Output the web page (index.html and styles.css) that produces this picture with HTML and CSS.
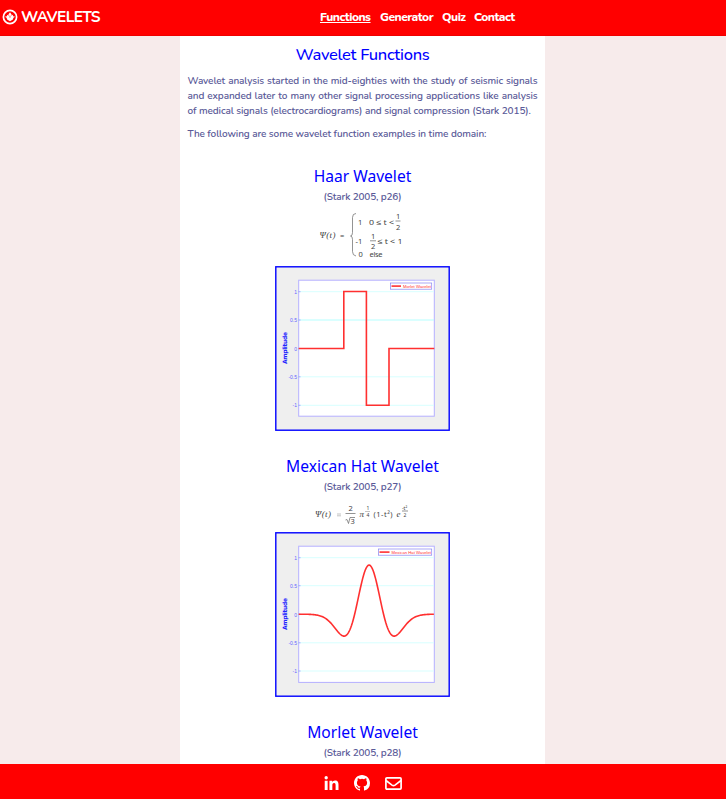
FILE: index.html
```html
<!DOCTYPE html>
<html lang="en">
<head>
<meta charset="utf-8">
<title>Wavelets</title>
<link rel="stylesheet" href="styles.css">
</head>
<body>
<header class="topbar">
  <a class="brand">
    <svg class="brand-icon" viewBox="0 0 16 16"><circle cx="8" cy="8" r="6.6" fill="none" stroke="#fff" stroke-width="1.7"/><path d="M8 3.2l1.600 2.300-.3 1.200 1.400-.9.5 1.400 1.900.5-1.700 1.100-.5 1.600L8 12.300l-2.900-1.900-.5-1.600-1.700-1.100 1.900-.5.5-1.400 1.400.9-.3-1.200z" fill="#fff"/><path d="M8 6.500v2.200" stroke="red" stroke-width=".7"/></svg>
    <span class="brand-name">WAVELETS</span>
  </a>
  <nav class="nav">
    <a class="n1 active">Functions</a><a class="n2">Generator</a><a class="n3">Quiz</a><a class="n4">Contact</a>
  </nav>
</header>
<main class="page">
  <h1>Wavelet Functions</h1>
  <p class="intro">Wavelet analysis started in the mid-eighties with the study of seismic signals and expanded later to many other signal processing applications like analysis of medical signals (electrocardiograms) and signal compression (Stark 2015).</p>
  <p class="lead">The following are some wavelet function examples in time domain:</p>

  <section class="wavelet">
    <h2>Haar Wavelet</h2>
    <p class="cite">(Stark 2005, p26)</p>
    <svg class="formula haar-formula" viewBox="0 2.5 175 61">
      <g class="math">
        <text x="44.500" y="35" class="it" textLength="16">Ψ(t)</text><text x="65" y="35">=</text>
        <path d="M81 11q-3.500 0-3.500 4v15q0 3.500-2 3.500q2 0 2 3.500v12q0 4 3.500 4.500" class="stroke"/>
        <text x="83" y="22.500">1</text><text x="94" y="22.500" textLength="25" lengthAdjust="spacingAndGlyphs">0 ≤ t &lt;</text>
        <text x="121" y="16">1</text><path d="M120.500 18.500h5" class="stroke"/><text x="121" y="27.500">2</text>
        <text x="80.500" y="41">-1</text><text x="96" y="36">1</text><path d="M95 38.300h6" class="stroke"/><text x="96" y="46.500">2</text>
        <text x="102.500" y="41" textLength="25" lengthAdjust="spacingAndGlyphs">≤ t &lt; 1</text>
        <text x="83.500" y="54.500">0</text><text x="94.500" y="54.500" textLength="13">else</text>
      </g>
    </svg>
    <svg class="chart" viewBox="0 0 175 165">
      <rect x=".8" y=".8" width="173.400" height="163.400" class="frame"/>
      <rect x="23.700" y="14.200" width="135.600" height="136" class="plot"/>
      <path d="M24 25.700h135M24 110.800h135M24 139.300h135" class="grid"/><path d="M24 54h135" class="grid strong"/>
      <path d="M23.500 25.700h2M23.500 54h2M23.500 82.500h2M23.500 110.800h2M23.500 139.300h2" class="tick"/>
      <g class="labels"><text x="22" y="27.500">1</text><text x="22" y="56">0.5</text><text x="22" y="84.500">0</text><text x="22" y="112.500">-0.5</text><text x="22" y="141">-1</text></g>
      <text class="axis" transform="translate(11.500 98) rotate(-90)" textLength="32">Amplitude</text>
      <path d="M23.700 82.500h45.100v-57h22.600v113.800h22.600V82.500h45.300" class="curve"/>
      <rect x="115.500" y="17" width="41.200" height="6.200" class="legend"/><path d="M116.500 20.100h9.500" class="curve"/>
      <text x="128" y="21.800" class="legend-text" textLength="28">Morlet Wavelet</text>
    </svg>
  </section>

  <section class="wavelet">
    <h2>Mexican Hat Wavelet</h2>
    <p class="cite">(Stark 2005, p27)</p>
    <svg class="formula hat-formula" viewBox="0 2 175 37">
      <g class="math">
        <text x="40" y="24" class="it" textLength="16">Ψ(t)</text><path d="M62 21h4M62 22.800h4" class="stroke faint"/>
        <text x="73.500" y="18">2</text><path d="M70.500 20.500h10M70.500 27l1.500-.5 1.500 4 1.500-6h5" class="stroke"/><text x="75.500" y="30.500">3</text>
        <text x="84.500" y="24" class="it">π</text><text x="91.500" y="17" class="small">1</text><path d="M90 18.500h5" class="stroke faint"/><text x="91.500" y="23.500" class="small">4</text>
        <text x="98.500" y="24" textLength="19">(1-t²)</text><text x="121.500" y="24" class="it">e</text>
        <text x="127" y="17" class="small">-t²</text><path d="M127 18h6" class="stroke"/><text x="128.500" y="23.500" class="small">2</text>
      </g>
    </svg>
    <svg class="chart" viewBox="0 0 175 165">
      <rect x=".8" y=".8" width="173.400" height="163.400" class="frame"/>
      <rect x="23.700" y="14.200" width="135.600" height="136.200" class="plot"/>
      <path d="M24 25.700h135M24 53.700h135M24 110.800h135M24 139h135" class="grid"/>
      <path d="M23.500 25.700h2M23.500 53.700h2M23.500 82.200h2M23.500 110.800h2M23.500 139h2" class="tick"/>
      <g class="labels"><text x="22" y="27.500">1</text><text x="22" y="56">0.5</text><text x="22" y="84.500">0</text><text x="22" y="112.500">-0.5</text><text x="22" y="141">-1</text></g>
      <text class="axis" transform="translate(11.500 98) rotate(-90)" textLength="32">Amplitude</text>
      <path id="hat-curve" class="curve"/>
      <rect x="103.500" y="17" width="53.200" height="6.200" class="legend"/><path d="M104.500 20.100h10" class="curve"/>
      <text x="116.500" y="21.800" class="legend-text" textLength="39.500">Mexican Hat Wavelet</text>
    </svg>
  </section>

  <section class="wavelet">
    <h2>Morlet Wavelet</h2>
    <p class="cite">(Stark 2005, p28)</p>
  </section>
</main>
<footer class="footer">
  <svg class="linkedin" viewBox="0 0 448 448"><path fill="#fff" d="M100 448H7V149h93zM53.500 108a54 54 0 1 1 0-108 54 54 0 0 1 0 108zM448 448h-93V302c0-35-1-79-48-79-49 0-56 38-56 77v148h-93V149h89v41h1c13-24 43-48 88-48 94 0 112 62 112 142z"/></svg>
  <svg class="github" viewBox="0 0 16 16"><path fill="#fff" d="M8 0C3.580 0 0 3.580 0 8c0 3.540 2.290 6.530 5.470 7.590.4.070.55-.17.55-.38 0-.19-.01-.82-.01-1.490-2.010.37-2.530-.49-2.690-.94-.09-.23-.48-.94-.82-1.130-.28-.15-.68-.52-.01-.53.63-.01 1.080.58 1.230.82.72 1.210 1.870.87 2.330.66.07-.52.28-.87.51-1.070-1.780-.2-3.640-.89-3.640-3.950 0-.87.31-1.590.82-2.150-.08-.2-.36-1.020.08-2.120 0 0 .67-.21 2.200.82a7.600 7.600 0 0 1 4 0c1.530-1.040 2.200-.82 2.200-.82.44 1.100.16 1.920.08 2.120.51.56.82 1.270.82 2.150 0 3.070-1.870 3.750-3.650 3.950.29.25.54.73.54 1.480 0 1.070-.01 1.930-.01 2.200 0 .21.15.46.55.38A8 8 0 0 0 16 8c0-4.420-3.580-8-8-8z"/></svg>
  <svg class="mail" viewBox="0 0 17 13"><rect x=".9" y=".9" width="15.200" height="11.200" rx="1" fill="none" stroke="#fff" stroke-width="1.700"/><path d="M1 3.500l6 4.600q1.500 1 3 0l6-4.600" fill="none" stroke="#fff" stroke-width="1.600"/></svg>
</footer>
<script src="script.js"></script>
</body>
</html>
```
FILE: styles.css
```css
* { box-sizing: border-box; }
html, body { height: 100%; margin: 0; }
body {
  display: flex;
  flex-direction: column;
  overflow: hidden;
  background: #f7ebeb;
  font-family: Nunito, "Open Sans", "Noto Sans", sans-serif;
  color: #5a5a98;
}
.topbar {
  flex: 0 0 36px;
  display: grid;
  grid-template-columns: 320px 1fr;
  align-items: center;
  background: #f00;
  color: #fff;
  border-bottom: 1px solid #ef0000;
  padding-bottom: 1px;
}
.brand { display: flex; align-items: center; gap: 3px; padding-left: 2px; }
.brand-icon { width: 16px; height: 16px; }
.brand-name { font: 700 15.500px/20px Nunito, "Open Sans", sans-serif; letter-spacing: -.65px; }
.nav { display: flex; gap: 8px; font-size: 12px; font-weight: 800; line-height: 18px; letter-spacing: -.5px; white-space: nowrap; }
.n1 { width: 52px; }
.n2 { width: 54px; }
.n3 { width: 24px; }
.active { text-decoration: underline; }
.page {
  flex: 1 1 0;
  min-height: 0;
  overflow: hidden;
  width: 365px;
  margin-left: 180px;
  padding: 7px 7.500px 0;
  background: #fff;
}
h1, h2 { margin: 0; color: #00f; font-weight: 400; text-align: center; }
h1 { font-size: 16.500px; font-weight: 500; line-height: 24px; letter-spacing: -.3px; }
p { margin: 0; font-size: 10px; font-weight: 600; line-height: 15px; letter-spacing: -.1px; }
.intro { margin-top: 7px; text-align: justify; }
.lead { margin-top: 8px; }
.wavelet { display: flex; flex-direction: column; align-items: center; }
.wavelet h2 { font: 400 15.600px/24px "Noto Sans", sans-serif; }
.wavelet .cite { margin-top: 2px; letter-spacing: -.15px; }
.lead + .wavelet { margin-top: 22px; }
.wavelet + .wavelet { margin-top: 23px; }
.formula { width: 175px; display: block; }
.haar-formula { height: 61px; }
.hat-formula { height: 37px; }
.chart { width: 175px; height: 165px; display: block; }
.math { font-family: "Noto Sans", sans-serif; font-size: 7.500px; fill: #444; }
.it { font-style: italic; font-family: "Liberation Serif", serif; font-size: 9px; }
.small { font-size: 5px; }
.stroke { fill: none; stroke: #666; stroke-width: .7; }
.faint { stroke: #aaa; }
.frame { fill: #efefef; stroke: #00f; stroke-width: 1.400; }
.plot { fill: #fff; stroke: #b5b0ff; stroke-width: 1; }
.grid { stroke: #d8ffff; stroke-width: 1; }
.strong { stroke: #b5ffff; }
.tick { stroke: #8a86ff; stroke-width: .7; }
.labels { font: 5px "Liberation Sans", sans-serif; fill: #6565ff; text-anchor: end; }
.axis { font: 700 6px "DejaVu Sans", sans-serif; fill: #22f; }
.curve { fill: none; stroke: #ff3030; stroke-width: 1.600; }
.legend { fill: #fff; stroke: #8884f0; stroke-width: .7; }
.legend-text { font: 4.200px "Liberation Sans", sans-serif; fill: #ff3030; }
.footer {
  flex: 0 0 35px;
  display: flex;
  align-items: center;
  justify-content: center;
  gap: 15px;
  background: #f00;
  padding: 3px 1px 0 0;
}
.linkedin { width: 15px; height: 14px; }
.github { width: 16px; height: 16px; }
.mail { width: 17px; height: 13px; }
```
FILE: script.js
```js
const points = [];
for (let x = 23.7; x <= 159.3; x += 0.8) {
  const t = (x - 94.1) / 14.45;
  const y = 82.2 - 56.7 * 0.867 * (1 - t * t) * Math.exp(-t * t / 2);
  points.push(x.toFixed(2) + "," + y.toFixed(2));
}
document.getElementById("hat-curve").setAttribute("d", "M" + points.join("L"));
```
